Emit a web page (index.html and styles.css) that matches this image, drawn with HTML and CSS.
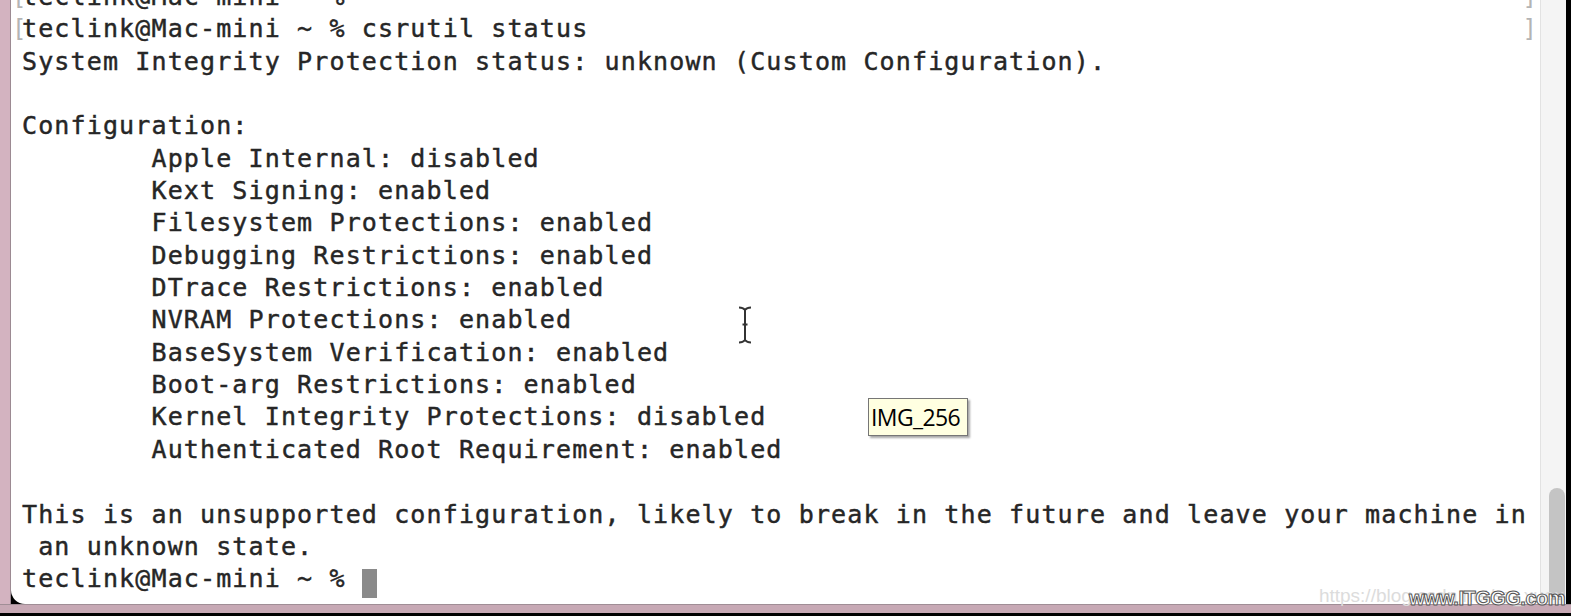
FILE: index.html
```html
<!DOCTYPE html>
<html>
<head>
<meta charset="utf-8">
<link rel="stylesheet" href="styles.css">
</head>
<body>
<div class="screen">
  <div class="main">
    <div class="side"></div>
    <div class="term">
      <div class="marks">
        <div class="mark-row"><span class="lmark">[</span><span class="rmark">]</span></div>
        <div class="mark-row"><span class="lmark">[</span><span class="rmark">]</span></div>
      </div>
<pre class="out">teclink@Mac-mini ~ %
teclink@Mac-mini ~ % csrutil status
System Integrity Protection status: unknown (Custom Configuration).

Configuration:
        Apple Internal: disabled
        Kext Signing: enabled
        Filesystem Protections: enabled
        Debugging Restrictions: enabled
        DTrace Restrictions: enabled
        NVRAM Protections: enabled
        BaseSystem Verification: enabled
        Boot-arg Restrictions: enabled
        Kernel Integrity Protections: disabled
        Authenticated Root Requirement: enabled

This is an unsupported configuration, likely to break in the future and leave your machine in
 an unknown state.
teclink@Mac-mini ~ % <span class="cursor"> </span></pre>
      <svg class="ibeam" width="14" height="38" viewBox="0 0 14 38">
        <path d="M1 1.5 Q5 1.5 7 4 Q9 1.5 13 1.5 M7 4 V34 M1 36.5 Q5 36.5 7 34 Q9 36.5 13 36.5 M4.5 18.5 H9.5" fill="none" stroke="#333" stroke-width="2"/>
      </svg>
      <div class="tooltip">IMG_256</div>
    </div>
    <div class="scroll"><div class="thumb"></div></div>
    <div class="edge"></div>
  </div>
  <div class="bottom"></div>
  <div class="watermark"><span class="csdn">https://blog.csdn.net/sz_xuexiao</span><span class="itggg">www.ITGGG.com</span></div>
</div>
</body>
</html>
```
FILE: styles.css
```css
html, body {
  margin: 0;
  padding: 0;
  background: #000;
}
body {
  width: 1571px;
  height: 616px;
  overflow: hidden;
}
.screen {
  position: relative;
  width: 1571px;
  height: 616px;
  display: flex;
  flex-direction: column;
  background: #000;
}
.main {
  display: flex;
  height: 604px;
}
.side {
  width: 10px;
  background: #d3b3c0;
  border-right: 1px solid #9c8a92;
}
.term {
  position: relative;
  flex: 1;
  background: #fff;
  border-bottom-left-radius: 14px;
  overflow: hidden;
}
.out {
  margin: -19px 0 0 11px;
  font-family: "DejaVu Sans Mono", "Liberation Mono", monospace;
  font-size: 25px;
  letter-spacing: 1.13px;
  line-height: 32.35px;
  color: #262626;
  white-space: pre;
  -webkit-text-stroke: 0.45px #262626;
}
.cursor {
  display: inline-block;
  width: 15px;
  height: 29px;
  background: #8a8a8a;
  vertical-align: -6px;
  letter-spacing: 0;
}
.marks {
  position: absolute;
  left: 0;
  right: 0;
  top: -19px;
  font-family: "DejaVu Sans Mono", monospace;
  font-size: 24px;
  line-height: 32.35px;
  color: #b4b4b4;
}
.mark-row {
  display: flex;
  justify-content: space-between;
  padding: 0 3px 0 1px;
}
.ibeam {
  position: absolute;
  left: 727px;
  top: 306px;
}
.tooltip {
  position: absolute;
  left: 857px;
  top: 398px;
  width: 100px;
  height: 38px;
  box-sizing: border-box;
  background: #ffffe1;
  border: 1px solid #767676;
  box-shadow: 2px 2px 2px rgba(0,0,0,0.35);
  font-family: "Open Sans", "Noto Sans", sans-serif;
  font-size: 23px;
  line-height: 36px;
  padding-left: 2px;
  color: #000;
  letter-spacing: -0.6px;
  white-space: nowrap;
}
.scroll {
  width: 26px;
  box-sizing: border-box;
  background: #f4f4f4;
  border-left: 1px solid #e2e2e2;
  display: flex;
  flex-direction: column;
  justify-content: flex-end;
  padding: 0 1px 4px 8px;
}
.thumb {
  height: 112px;
  background: #c4c4c4;
  border-radius: 8px 8px 0 0;
}
.edge {
  width: 5px;
  background: #000;
}
.bottom {
  height: 8px;
  background: #c7a9b5;
  border-top: 1px solid #a08e96;
}
.watermark {
  position: absolute;
  right: 6px;
  bottom: 6px;
  display: flex;
  align-items: flex-end;
  white-space: nowrap;
  font-family: "Liberation Sans", Arial, sans-serif;
}
.csdn {
  flex: none;
  width: 245px;
  overflow: hidden;
  font-size: 19px;
  color: #dcdcdc;
  margin-right: -155px;
  margin-bottom: 3px;
}
.itggg {
  flex: none;
  position: relative;
  font-size: 20px;
  font-weight: bold;
  color: #fff;
  -webkit-text-stroke: 1px #555;
  letter-spacing: -0.5px;
}
```
